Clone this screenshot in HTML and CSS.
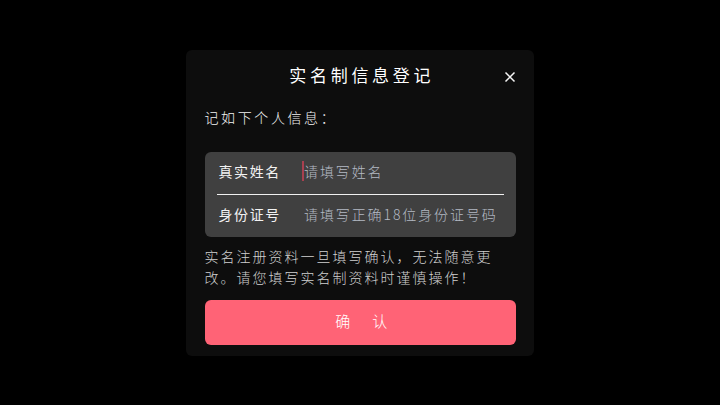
FILE: index.html
```html
<!DOCTYPE html>
<html lang="zh-CN">
<head>
  <meta charset="UTF-8">
  <title>实名制信息登记</title>
  <link rel="stylesheet" href="styles.css">
</head>
<body>
  <div class="modal">
    <div class="modal-head">
      <h2>实名制信息登记</h2>
      <button class="close" aria-label="关闭">
        <svg width="12" height="12" viewBox="0 0 12 12"><path d="M1.5 1.5L10.5 10.5M10.5 1.5L1.5 10.5" stroke="#f5f5f5" stroke-width="1.5" fill="none"/></svg>
      </button>
    </div>
    <p class="intro">记如下个人信息&#xFF1A;</p>

    <div class="fields">
      <div class="field">
        <label for="realname">真实姓名</label>
        <input id="realname" class="active" type="text" placeholder="请填写姓名">
      </div>
      <div class="field">
        <label for="idcard">身份证号</label>
        <input id="idcard" type="text" placeholder="请填写正确18位身份证号码">
      </div>
    </div>

    <p class="note">实名注册资料一旦填写确认&#xFF0C;无法随意更改。请您填写实名制资料时谨慎操作&#xFF01;</p>
    <button class="confirm">确 认</button>
  </div>
</body>
</html>
```

FILE: styles.css
```css
/* Page */
* {
  box-sizing: border-box;
}

html, body {
  height: 100%;
}

body {
  margin: 0;
  background: #000;
  color: #fff;
  font-family: "Noto Sans CJK SC", "Noto Sans", sans-serif;
  font-weight: 300;
  display: flex;
  align-items: flex-start;
  justify-content: center;
  padding-top: 50px;
}

/* Modal */
.modal {
  width: 348px;
  height: 306px;
  background: #0d0d0d;
  border-radius: 6px;
  padding: 0 18px 0 18.5px;
  display: flex;
  flex-direction: column;
}

.modal-head {
  height: 52px;
  display: flex;
  align-items: center;
  justify-content: center;
  position: relative;
}

.modal-head h2 {
  margin: 0 0 4px;
  padding-left: 3px;
  font-size: 17px;
  font-weight: 400;
  letter-spacing: 3.7px;
}

.close {
  position: absolute;
  right: 0;
  top: 21px;
  width: 12px;
  height: 12px;
  padding: 0;
  border: none;
  background: none;
  line-height: 0;
}

.intro {
  margin: 5px 0 0;
  height: 20px;
  font-size: 14px;
  line-height: 20px;
  letter-spacing: 2.6px;
  color: #f2f2f2;
}

/* Form panel */
.fields {
  margin-top: 25px;
  height: 85px;
  background: #404040;
  border-radius: 6px;
  padding: 0 12px;
}

.field {
  height: 42px;
  padding-bottom: 4px;
  display: flex;
  align-items: center;
}

.field:first-child {
  height: 43px;
  padding-bottom: 4px;
  border-bottom: 1px solid #f0f0f0;
}

.field label {
  width: 85.5px;
  flex-shrink: 0;
  padding-left: 2px;
  font-size: 14px;
  font-weight: 400;
  letter-spacing: 1.6px;
  color: #f2f2f2;
}

.field input {
  flex: 1;
  min-width: 0;
  height: 20px;
  padding: 0;
  border: none;
  border-left: 2px solid transparent;
  outline: none;
  background: none;
  font-family: inherit;
  font-size: 14px;
  font-weight: 300;
  letter-spacing: 1.9px;
  color: #fff;
}

.field input.active {
  border-left-color: #a8404f;
}

.field input::placeholder {
  color: #b4bac4;
  opacity: 1;
}

.note {
  margin: 9px 0 0;
  padding-right: 12px;
  font-size: 14px;
  line-height: 21px;
  letter-spacing: 2px;
  color: #d0d0d0;
}

/* Confirm button */
.confirm {
  margin-top: 12px;
  height: 45px;
  padding: 0 0 4px 10px;
  border: none;
  border-radius: 6px;
  background: #ff6376;
  color: #fff;
  font-family: inherit;
  font-size: 15px;
  font-weight: 300;
  letter-spacing: 8px;
  word-spacing: 2.5px;
}
```
